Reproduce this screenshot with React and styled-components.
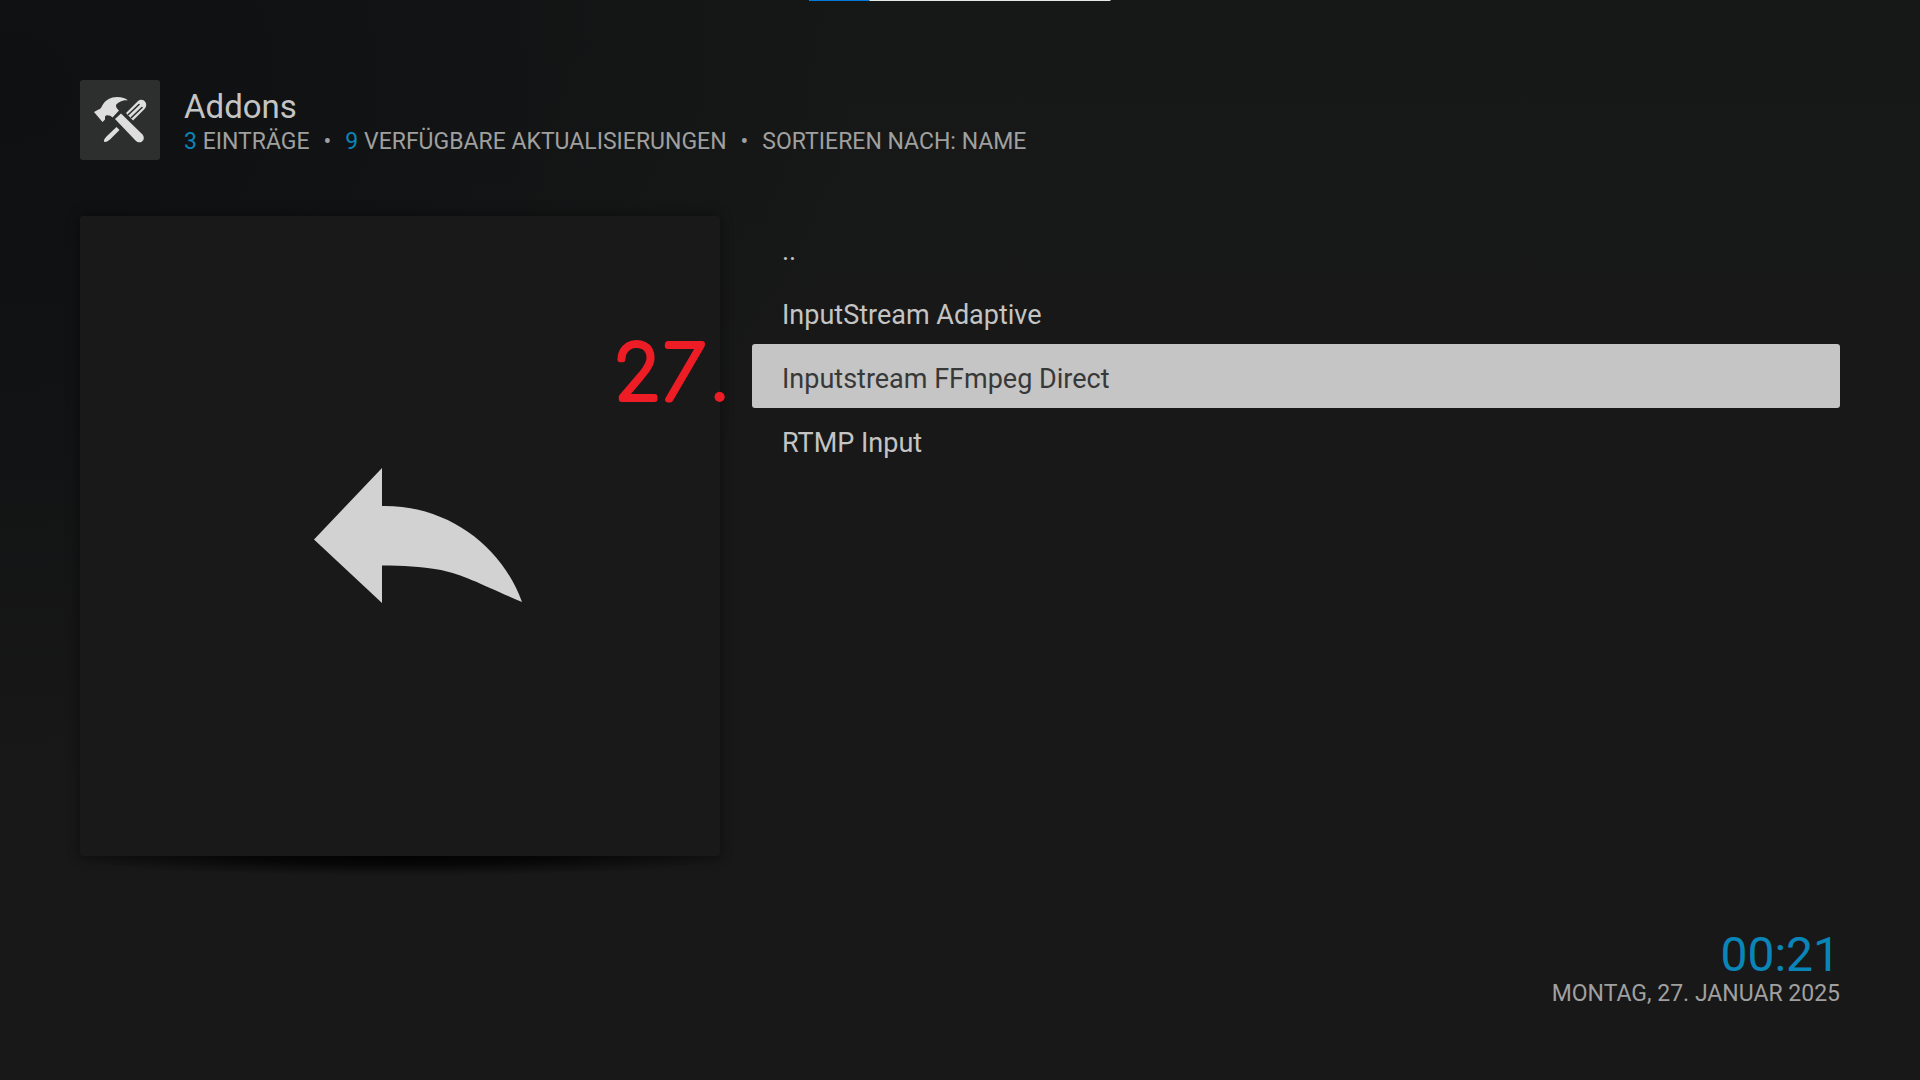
import React, { useState } from "react";
import styled, { createGlobalStyle } from "styled-components";

const GlobalStyle = createGlobalStyle`
  *, *::before, *::after { box-sizing: border-box; }
  body {
    margin: 0;
    background: #181818;
    font-family: Roboto, "Noto Sans", sans-serif;
    color: #c4c4c4;
  }
`;

const Screen = styled.div`
  position: relative;
  display: flex;
  flex-direction: column;
  min-height: 100vh;
  padding: 80px 80px 72px;
  background:
    radial-gradient(ellipse 45% 65% at 0% 8%, #0f1012 0%, rgba(15, 16, 18, 0.7) 45%, rgba(15, 16, 18, 0) 100%),
    linear-gradient(#161817 0%, #171817 30%, #181818 55%);
`;

const Progress = styled.div`
  position: absolute;
  top: 0;
  left: 50%;
  width: 301px;
  height: 1px;
  transform: translateX(-50%);
  background: #e4e9e4;
`;

const ProgressFill = styled.div`
  height: 100%;
  background: #0078d7;
`;

const Header = styled.header`
  display: flex;
  gap: 24px;
  margin-bottom: 56px;
`;

const IconTile = styled.div`
  flex: none;
  width: 80px;
  height: 80px;
  border-radius: 3px;
  background: #2d2f2e;
  svg { display: block; }
`;

const Heading = styled.div`
  padding-top: 9px;
`;

const Title = styled.h1`
  margin: 0;
  font-size: 33px;
  line-height: 36px;
  font-weight: 400;
`;

const Facts = styled.ul`
  display: flex;
  flex-wrap: wrap;
  margin: 0;
  padding: 0;
  list-style: none;
  font-size: 23px;
  line-height: 34px;
  text-transform: uppercase;
  color: #a0a0a0;
`;

const Fact = styled.li`
  & + &::before {
    content: "•";
    margin: 0 14px;
  }
`;

const Count = styled.span`
  color: #0a85b8;
`;

const Content = styled.main`
  display: flex;
  align-items: flex-start;
  gap: 32px;
`;

const Artwork = styled.div`
  position: relative;
  isolation: isolate;
  flex: 0 1 640px;
  aspect-ratio: 1;
  border-radius: 3px;
  box-shadow: 0 0 14px rgba(0, 0, 0, 0.45);
  &::before {
    content: "";
    position: absolute;
    z-index: -1;
    left: 0;
    right: 0;
    bottom: -20px;
    height: 40px;
    background: radial-gradient(
      ellipse 54% 50% at center,
      rgba(0, 0, 0, 0.9) 0%,
      rgba(0, 0, 0, 0.65) 45%,
      rgba(0, 0, 0, 0.3) 72%,
      rgba(0, 0, 0, 0) 100%
    );
  }
`;

const ArtworkFace = styled.div`
  display: flex;
  align-items: center;
  justify-content: center;
  width: 100%;
  height: 100%;
  border-radius: 3px;
  background: #191919;
`;

const Annotation = styled.svg`
  position: absolute;
  right: -16px;
  top: 108px;
  overflow: visible;
  text {
    font-family: Roboto, sans-serif;
    font-size: 77px;
    font-weight: 100;
    fill: #ee1c25;
    stroke: #ee1c25;
    stroke-width: 6px;
    stroke-linejoin: round;
  }
  .slanted {
    font-style: italic;
  }
`;

const List = styled.ul`
  flex: 1;
  min-width: 0;
  margin: 0;
  padding: 0;
  list-style: none;
`;

const Row = styled.button`
  display: block;
  width: 100%;
  height: 64px;
  padding: 4px 30px 0;
  border: 0;
  border-radius: 3px;
  outline: 0;
  font: 400 27px/62px Roboto, "Noto Sans", sans-serif;
  text-align: left;
  cursor: pointer;
  background: ${(p) => (p.$selected ? "#c5c5c5" : "transparent")};
  color: ${(p) => (p.$selected ? "#383838" : "#c4c4c4")};
`;

const Footer = styled.footer`
  margin-top: auto;
  text-align: right;
`;

const Clock = styled.time`
  display: block;
  font-size: 48px;
  line-height: 44px;
  color: #0a85b8;
`;

const DateLine = styled.time`
  display: block;
  font-size: 23px;
  line-height: 34px;
  margin-bottom: -3px;
  text-transform: uppercase;
  color: #a0a0a0;
`;

function ToolsIcon() {
  return (
    <svg width="80" height="80" viewBox="0 0 80 80" aria-hidden="true">
      <g fill="#dedede">
        <path d="M14 32 18.500 29.500C20 29.500 21 28 22 26C25 20 31 17 37 17C42 17 46 18.500 48 20.500C44 19.800 38.500 22 36 25C36 27 36.500 28.500 39 30.500L32.500 37.500C30 35 26.500 34.500 25 36.500L25 39.500 22.500 42Z" />
        <path d="M35 39 41 33.500 62.500 54.500C64.500 57 64 60 62 61.500C60 63 57.500 62.500 55.500 60.500Z" />
        <path d="M36.500 47 39.500 50 30 59.500C27 62 24.500 62.500 24 61.500C23.500 60.500 24.500 58.500 27 56Z" />
        <path d="M46 33 58 21C61 18.500 64 20 65 21.500C67 24 66.500 26.500 64.500 29L53 40.500Z" />
      </g>
      <path d="M48.500 34.500 59 24.500M51.500 37.500 62 27.500" stroke="#2d2f2e" strokeWidth="1.600" strokeLinecap="round" />
    </svg>
  );
}

function BackArrow() {
  return (
    <svg width="248" height="144" viewBox="-36 -4 248 144" aria-hidden="true">
      <path
        fill="#d2d2d2"
        d="M2 71.500 70 0V38C137 37 190 79 210 134C172 118 153 107 129 102C107 98 92 98 70 97.500V135Z"
      />
    </svg>
  );
}

const entries = ["..", "InputStream Adaptive", "Inputstream FFmpeg Direct", "RTMP Input"];

export default function App() {
  const [selected, setSelected] = useState(2);
  return (
    <>
      <GlobalStyle />
      <Screen>
        <Progress>
          <ProgressFill style={{ width: "20%" }} />
        </Progress>
        <Header>
          <IconTile>
            <ToolsIcon />
          </IconTile>
          <Heading>
            <Title>Addons</Title>
            <Facts>
              <Fact><Count>3</Count> Einträge</Fact>
              <Fact><Count>9</Count> verfügbare Aktualisierungen</Fact>
              <Fact>Sortieren nach: Name</Fact>
            </Facts>
          </Heading>
        </Header>
        <Content>
          <Artwork>
            <ArtworkFace>
              <BackArrow />
            </ArtworkFace>
            <Annotation width="120" height="90">
              <text x="0" y="75">2<tspan className="slanted" dx="2">7</tspan><tspan dx="11">.</tspan></text>
            </Annotation>
          </Artwork>
          <List>
            {entries.map((name, i) => (
              <li key={name}>
                <Row type="button" $selected={i === selected} onClick={() => setSelected(i)}>
                  {name}
                </Row>
              </li>
            ))}
          </List>
        </Content>
        <Footer>
          <Clock dateTime="00:21">00:21</Clock>
          <DateLine dateTime="2025-01-27">Montag, 27. Januar 2025</DateLine>
        </Footer>
      </Screen>
    </>
  );
}
